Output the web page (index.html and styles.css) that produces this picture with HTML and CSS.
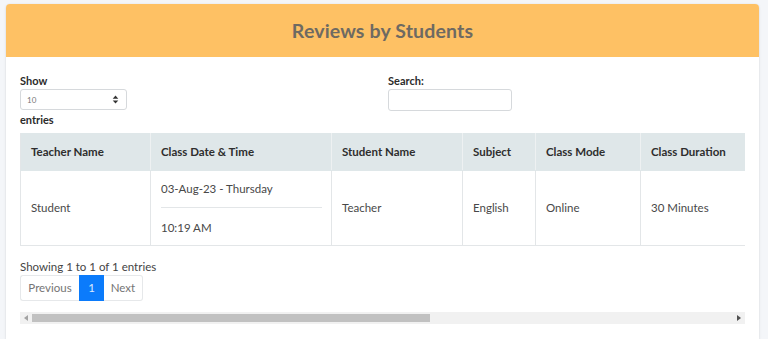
FILE: index.html
```html
<!DOCTYPE html>
<html lang="en">
<head>
<meta charset="utf-8">
<title>Reviews by Students</title>
<link rel="stylesheet" href="styles.css">
</head>
<body>
<div class="card">
  <div class="card-header">
    <h2 class="card-title">Reviews by Students</h2>
  </div>
  <div class="card-body">
    <div class="controls">
      <div class="length">
        <label class="lbl">Show</label>
        <div class="select">
          <span>10</span>
          <svg class="caret" viewBox="0 0 8 10" width="7" height="9"><path d="M4 0.5L7.2 4H0.8Z M4 9.5L0.8 6H7.2Z" fill="#333"/></svg>
        </div>
        <label class="lbl">entries</label>
      </div>
      <div class="search">
        <label class="lbl">Search:</label>
        <div class="input"></div>
      </div>
    </div>
    <div class="table-wrap">
      <table class="tbl">
        <thead>
          <tr>
            <th class="c1">Teacher Name</th>
            <th class="c2">Class Date &amp; Time</th>
            <th class="c3">Student Name</th>
            <th class="c4">Subject</th>
            <th class="c5">Class Mode</th>
            <th class="c6">Class Duration</th>
            <th class="c7"></th>
          </tr>
        </thead>
        <tbody>
          <tr>
            <td>Student</td>
            <td class="dt">
              <div class="dt-top">03-Aug-23 - Thursday</div>
              <div class="dt-bot">10:19 AM</div>
            </td>
            <td>Teacher</td>
            <td>English</td>
            <td>Online</td>
            <td>30 Minutes</td>
            <td></td>
          </tr>
        </tbody>
      </table>
    </div>
    <div class="info">Showing 1 to 1 of 1 entries</div>
    <div class="pager">
      <span class="pg">Previous</span>
      <span class="pg active">1</span>
      <span class="pg">Next</span>
    </div>
    <div class="scrollbar">
      <div class="arrow left"><svg viewBox="0 0 4 6" width="4" height="6"><path d="M4 0V6L0 3Z" fill="#a3a3a3"/></svg></div>
      <div class="track"><div class="thumb"></div></div>
      <div class="arrow right"><svg viewBox="0 0 4 6" width="4" height="6"><path d="M0 0V6L4 3Z" fill="#505050"/></svg></div>
    </div>
  </div>
</div>
</body>
</html>
```

FILE: styles.css
```css
* { box-sizing: border-box; }
html, body { margin: 0; height: 100%; }
body {
  background: #f4f6f9;
  padding: 4px 9px 0 6px;
  font-family: "Lato", "Open Sans", sans-serif;
  font-size: 11.5px;
  color: #444;
  overflow: hidden;
}
.card {
  background: #fff;
  border-radius: 4px 4px 0 0;
  box-shadow: 0 0 1px rgba(0,0,0,.15), 0 1px 3px rgba(0,0,0,.1);
  height: 335px;
}
.card-header {
  background: #fec164;
  height: 53px;
  border-radius: 4px 4px 0 0;
  display: flex;
  align-items: center;
  justify-content: center;
}
.card-title {
  margin: 0;
  font-size: 19.5px;
  font-weight: 700;
  color: #6e6a62;
  letter-spacing: 0.15px;
}
.card-body {
  padding: 16px 14px 0 14px;
}
.controls {
  display: grid;
  grid-template-columns: 368px 1fr;
}
.lbl {
  display: block;
  font-weight: 700;
  color: #2b2b2b;
  font-size: 11px;
  line-height: 16px;
}
.select {
  width: 107px;
  height: 21px;
  border: 1px solid #d6d9dc;
  border-radius: 3px;
  display: flex;
  align-items: center;
  justify-content: space-between;
  padding: 0 7px 0 6px;
  font-size: 8px;
  color: #777;
  margin: 0 0 2px;
}
.caret { display: block; }
.input {
  width: 124px;
  height: 22px;
  border: 1px solid #d6d9dc;
  border-radius: 3px;
}
.table-wrap {
  margin-top: 5px;
  width: 725px;
  overflow: hidden;
}
.tbl {
  border-collapse: collapse;
  table-layout: fixed;
  width: 900px;
}
.tbl th, .tbl td {
  text-align: left;
  padding: 0 9px 0 10px;
  border: 1px solid #e3e6e8;
  border-top: none;
  vertical-align: middle;
}
.tbl tr > :first-child { border-left: 1px solid #e3e6e8; }
.tbl th {
  background: #dfe7e9;
  height: 37px;
  font-weight: 700;
  color: #2e2e2e;
  border-color: #dfe7e9;
  border-right-color: #eef1f2;
}
.tbl td {
  height: 75px;
  color: #484848;
}
.c1 { width: 130px; }
.c2 { width: 181px; }
.c3 { width: 131px; }
.c4 { width: 73px; }
.c5 { width: 105px; }
.c6 { width: 105px; }
.c7 { width: 175px; }
.tbl td.dt { padding-top: 0; padding-bottom: 0; }
.dt-top {
  height: 37px;
  display: flex;
  align-items: center;
  border-bottom: 1px solid #e3e6e8;
  padding-top: 0;
}
.dt-bot {
  height: 37px;
  display: flex;
  align-items: center;
  padding-top: 3px;
}
.info {
  margin-top: 13px;
  line-height: 16px;
  color: #444;
}
.pager {
  display: flex;
  margin-top: 0;
}
.pg {
  height: 26px;
  display: flex;
  align-items: center;
  justify-content: center;
  border: 1px solid #e6e8ea;
  color: #757575;
  font-size: 11.5px;
}
.pg:first-child { width: 59px; border-radius: 3px 0 0 3px; border-right: none; }
.pg:last-child { width: 39px; border-radius: 0 3px 3px 0; border-left: none; }
.pg.active {
  width: 25px;
  background: #0b7bfb;
  border-color: #0b7bfb;
  color: #dbe9fb;
}
.scrollbar {
  margin-top: 11px;
  width: 725px;
  height: 12px;
  background: #f1f1f1;
  display: flex;
}
.arrow {
  width: 12px;
  display: flex;
  align-items: center;
  justify-content: center;
}
.track { flex: 1; }
.thumb {
  width: 398px;
  height: 100%;
  background: #c1c1c1;
  border-top: 2px solid #f1f1f1;
  border-bottom: 2px solid #f1f1f1;
}
```
